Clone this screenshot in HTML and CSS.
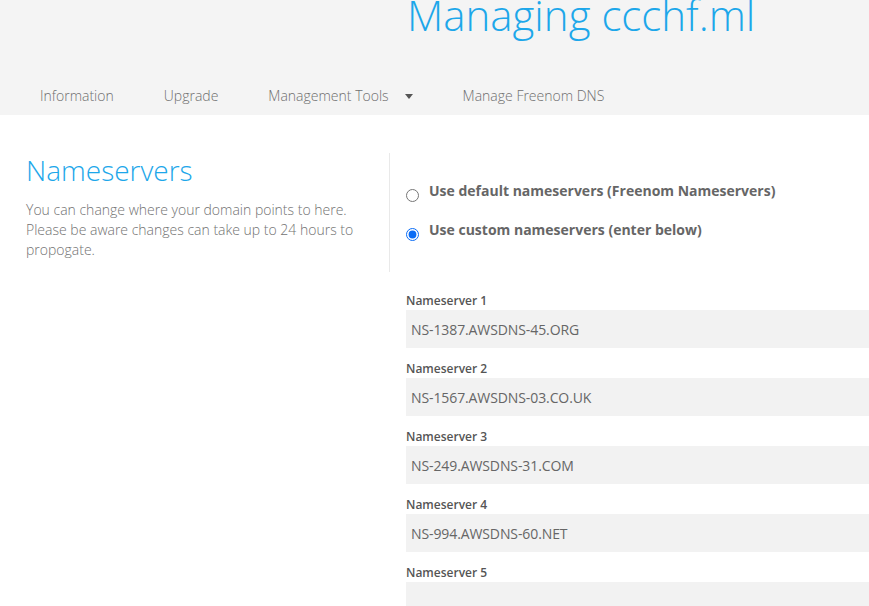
FILE: index.html
```html
<!DOCTYPE html>
<html lang="en">
<head>
<meta charset="utf-8">
<title>Managing ccchf.ml</title>
<link rel="stylesheet" href="styles.css">
</head>
<body>
<header class="header">
  <div class="header-top">
    <div class="header-spacer"></div>
    <h1 class="title">Managing ccchf.ml</h1>
  </div>
  <nav class="tabs">
    <a class="tab">Information</a>
    <a class="tab">Upgrade</a>
    <a class="tab">Management Tools <span class="caret"></span></a>
    <a class="tab">Manage Freenom DNS</a>
  </nav>
</header>
<main class="content">
  <section class="intro">
    <h2 class="intro-title">Nameservers</h2>
    <p class="intro-text">You can change where your domain points to here. Please be aware changes can take up to 24 hours to propogate.</p>
  </section>
  <section class="choices">
    <label class="choice"><input type="radio" name="ns" class="radio"><span>Use default nameservers (Freenom Nameservers)</span></label>
    <label class="choice"><input type="radio" name="ns" class="radio" checked><span>Use custom nameservers (enter below)</span></label>
  </section>
  <div class="blank"></div>
  <section class="fields">
    <div class="field">
      <label class="field-label">Nameserver 1</label>
      <input class="field-input" type="text" value="NS-1387.AWSDNS-45.ORG">
    </div>
    <div class="field">
      <label class="field-label">Nameserver 2</label>
      <input class="field-input" type="text" value="NS-1567.AWSDNS-03.CO.UK">
    </div>
    <div class="field">
      <label class="field-label">Nameserver 3</label>
      <input class="field-input" type="text" value="NS-249.AWSDNS-31.COM">
    </div>
    <div class="field">
      <label class="field-label">Nameserver 4</label>
      <input class="field-input" type="text" value="NS-994.AWSDNS-60.NET">
    </div>
    <div class="field">
      <label class="field-label">Nameserver 5</label>
      <input class="field-input" type="text" value="">
    </div>
  </section>
</main>
</body>
</html>
```
FILE: styles.css
```css
* { box-sizing: border-box; }
html, body { margin: 0; padding: 0; overflow: hidden; }
body {
  font-family: "Open Sans", "Liberation Sans", sans-serif;
  background: #fff;
  color: #666;
  width: 869px;
  height: 606px;
}
.header {
  background: #f4f4f4;
  height: 115px;
  display: flex;
  flex-direction: column;
}
.header-top {
  height: 77px;
  display: grid;
  grid-template-columns: 407px 1fr;
}
.title {
  margin: -13px 0 0 0;
  font-weight: 300;
  font-size: 42px;
  line-height: 56px;
  color: #1da7ea;
  white-space: nowrap;
}
.tabs {
  display: flex;
  padding-left: 15px;
  height: 38px;
}
.tab {
  padding: 0 25px;
  line-height: 38px;
  font-size: 14px;
  font-weight: 300;
  color: #6f6f6f;
  display: flex;
  align-items: center;
}
.caret {
  display: inline-block;
  width: 0;
  height: 0;
  border-left: 4px solid transparent;
  border-right: 4px solid transparent;
  border-top: 5px solid #555;
  margin-left: 16px;
  margin-top: 1px;
}
.content {
  display: grid;
  grid-template-columns: 390px 1fr;
  padding-top: 38px;
}
.intro {
  padding: 0 24px 0 26px;
  border-right: 1px solid #e9e9e9;
  height: 119px;
}
.intro-title {
  margin: -2px 0 0 0;
  font-size: 28px;
  font-weight: 300;
  line-height: 38px;
  color: #1da7ea;
}
.intro-text {
  margin: 11px 0 0 0;
  font-size: 14px;
  font-weight: 300;
  line-height: 20px;
  color: #727272;
}
.choices {
  padding: 31px 0 0 16px;
  display: flex;
  flex-direction: column;
  gap: 19px;
}
.choice {
  display: flex;
  align-items: center;
  font-size: 14px;
  font-weight: 700;
  color: #666;
  height: 20px;
}
.choice span { margin-top: -8px; }
.radio {
  margin: 3px 10px 0 0;
  width: 13px;
  height: 13px;
  accent-color: #0a6cf5;
}
.fields {
  padding: 19px 0 0 16px;
  display: flex;
  flex-direction: column;
  gap: 11px;
}
.field {
  display: flex;
  flex-direction: column;
}
.field-label {
  font-size: 12px;
  font-weight: 600;
  color: #555;
  line-height: 19px;
}
.field-input {
  height: 38px;
  width: 100%;
  border: 0;
  background: #f2f2f2;
  padding: 0 5px;
  font-family: "Open Sans", "Liberation Sans", sans-serif;
  font-size: 14px;
  letter-spacing: -0.1px;
  color: #666;
  outline: none;
}
```
